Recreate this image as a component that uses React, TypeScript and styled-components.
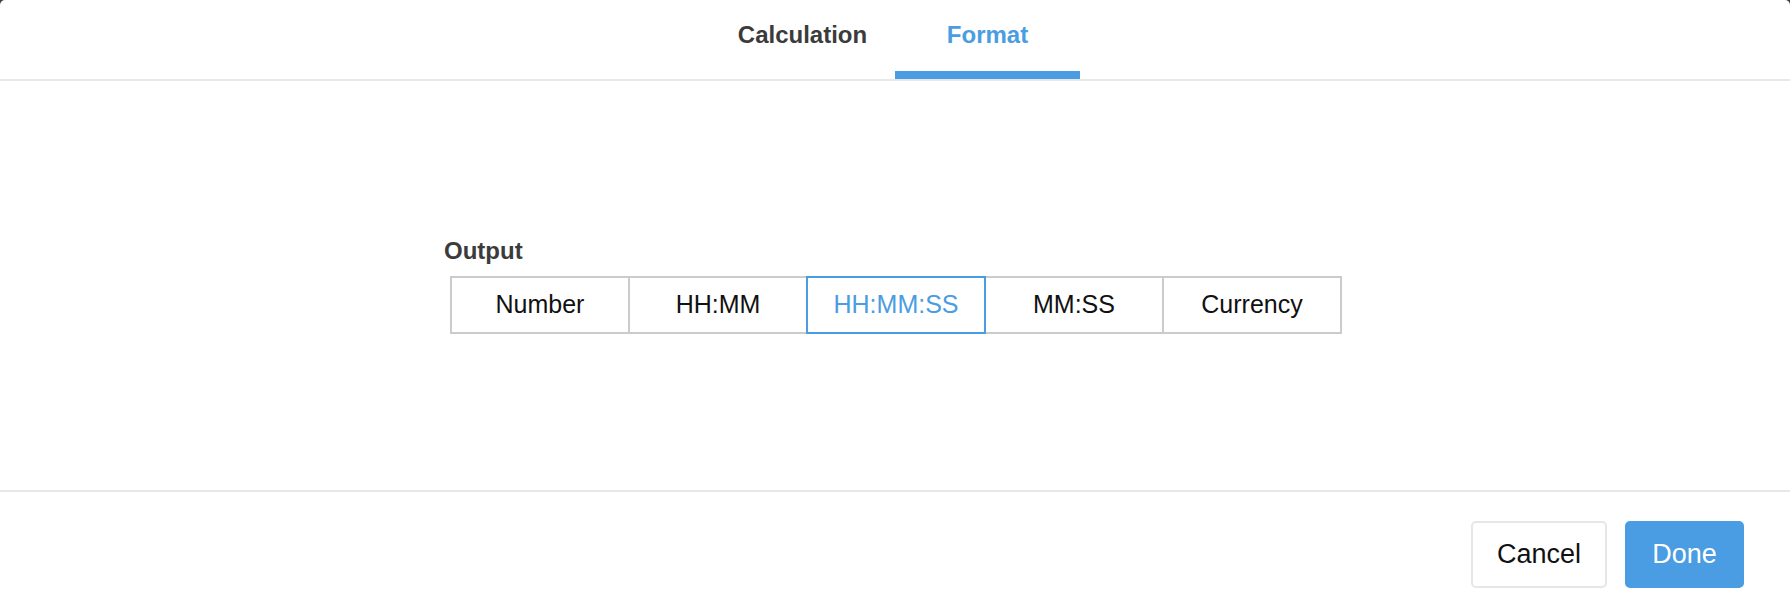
import React, { useState } from 'react';
import styled, { createGlobalStyle } from 'styled-components';

const GlobalStyle = createGlobalStyle`
  html, body {
    margin: 0;
    padding: 0;
    background: #3d3d3d;
  }
  body {
    font-family: "Liberation Sans", Arial, sans-serif;
  }
`;

const Dialog = styled.div`
  width: 1790px;
  height: 616px;
  background: #fff;
  border-radius: 5px 5px 0 0;
  display: flex;
  flex-direction: column;
  overflow: hidden;
`;

const TabBar = styled.div`
  display: flex;
  justify-content: center;
  border-bottom: 2px solid #e8e8e8;
  flex: 0 0 auto;
`;

const Tab = styled.button<{ $active?: boolean }>`
  width: 185px;
  height: 79px;
  box-sizing: border-box;
  border: 0;
  border-bottom: 8px solid ${({ $active }) => ($active ? '#4a9de2' : 'transparent')};
  background: none;
  padding: 0 0 2px;
  display: flex;
  align-items: center;
  justify-content: center;
  font-family: inherit;
  font-size: 24px;
  font-weight: 700;
  color: ${({ $active }) => ($active ? '#4a9de2' : '#3b3b3b')};
  cursor: pointer;
`;

const Body = styled.div`
  flex: 1 1 auto;
  display: flex;
  align-items: center;
  justify-content: center;
`;

const Field = styled.div`
  display: flex;
  flex-direction: column;
  width: 890px;
`;

const Label = styled.div`
  margin: 0 0 11px -6px;
  font-size: 24px;
  line-height: 28px;
  font-weight: 700;
  color: #3b3b3b;
`;

const Segments = styled.div`
  display: flex;
`;

const Segment = styled.button<{ $active?: boolean }>`
  position: relative;
  z-index: ${({ $active }) => ($active ? 1 : 0)};
  flex: 0 0 180px;
  height: 58px;
  box-sizing: border-box;
  margin-left: -2px;
  border: 2px solid ${({ $active }) => ($active ? '#4a9de2' : '#cbcbcb')};
  background: #fff;
  font-family: inherit;
  font-size: 25px;
  color: ${({ $active }) => ($active ? '#4a9de2' : '#111')};
  padding: 0 0 1px;
  cursor: pointer;

  &:first-child {
    margin-left: 0;
  }
`;

const Footer = styled.div`
  flex: 0 0 124px;
  border-top: 2px solid #e8e8e8;
  display: flex;
  align-items: center;
  justify-content: flex-end;
  gap: 18px;
  padding: 0 46px 0 0;
`;

const Button = styled.button<{ $primary?: boolean }>`
  height: 67px;
  box-sizing: border-box;
  padding: 0 ${({ $primary }) => ($primary ? '25px' : '24px')};
  min-width: ${({ $primary }) => ($primary ? '119px' : '136px')};
  border-radius: 5px;
  border: 2px solid ${({ $primary }) => ($primary ? '#4a9de2' : '#e6e6e6')};
  background: ${({ $primary }) => ($primary ? '#4a9de2' : '#fff')};
  color: ${({ $primary }) => ($primary ? '#fff' : '#111')};
  font-family: inherit;
  font-size: 27px;
  cursor: pointer;
`;

const formats = ['Number', 'HH:MM', 'HH:MM:SS', 'MM:SS', 'Currency'];

const App: React.FC = () => {
  const [tab, setTab] = useState('Format');
  const [format, setFormat] = useState('HH:MM:SS');

  return (
    <>
      <GlobalStyle />
      <Dialog>
        <TabBar>
          {['Calculation', 'Format'].map((t) => (
            <Tab key={t} $active={tab === t} onClick={() => setTab(t)}>
              {t}
            </Tab>
          ))}
        </TabBar>
        <Body>
          <Field>
            <Label>Output</Label>
            <Segments>
              {formats.map((f) => (
                <Segment key={f} $active={format === f} onClick={() => setFormat(f)}>
                  {f}
                </Segment>
              ))}
            </Segments>
          </Field>
        </Body>
        <Footer>
          <Button>Cancel</Button>
          <Button $primary>Done</Button>
        </Footer>
      </Dialog>
    </>
  );
};

export default App;
